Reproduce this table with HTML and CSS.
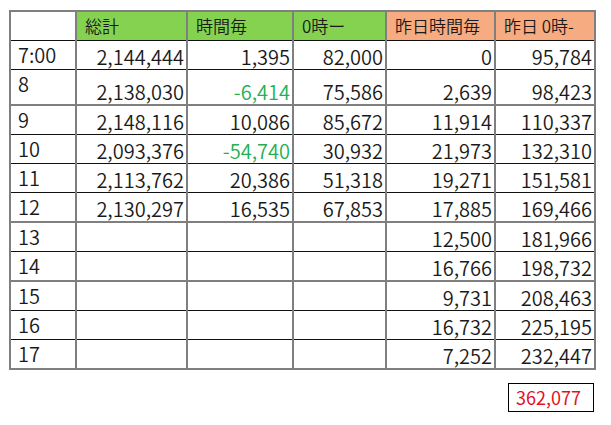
FILE: index.html
```html
<!DOCTYPE html>
<html lang="ja">
<head>
<meta charset="utf-8">
<link rel="stylesheet" href="styles.css">
</head>
<body>
<div class="page">
<table class="sheet">
  <colgroup>
    <col class="c1"><col class="c2"><col class="c3"><col class="c4"><col class="c5"><col class="c6">
  </colgroup>
  <tr class="head gb">
    <th class="blank"></th>
    <th class="green">総計</th>
    <th class="green">時間毎</th>
    <th class="green">0時ー</th>
    <th class="orange">昨日時間毎</th>
    <th class="orange">昨日 0時-</th>
  </tr>
  <tr class="bb">
    <td class="lbl">7:00</td><td>2,144,444</td><td>1,395</td><td>82,000</td><td>0</td><td>95,784</td>
  </tr>
  <tr class="tall gb">
    <td class="lbl top">8</td><td>2,138,030</td><td class="neg">-6,414</td><td>75,586</td><td>2,639</td><td>98,423</td>
  </tr>
  <tr class="bb">
    <td class="lbl">9</td><td>2,148,116</td><td>10,086</td><td>85,672</td><td>11,914</td><td>110,337</td>
  </tr>
  <tr class="bb">
    <td class="lbl">10</td><td>2,093,376</td><td class="neg">-54,740</td><td>30,932</td><td>21,973</td><td>132,310</td>
  </tr>
  <tr class="bb">
    <td class="lbl">11</td><td>2,113,762</td><td>20,386</td><td>51,318</td><td>19,271</td><td>151,581</td>
  </tr>
  <tr class="gb">
    <td class="lbl">12</td><td>2,130,297</td><td>16,535</td><td>67,853</td><td>17,885</td><td>169,466</td>
  </tr>
  <tr class="bb">
    <td class="lbl">13</td><td></td><td></td><td></td><td>12,500</td><td>181,966</td>
  </tr>
  <tr class="gb">
    <td class="lbl">14</td><td></td><td></td><td></td><td>16,766</td><td>198,732</td>
  </tr>
  <tr class="bb">
    <td class="lbl">15</td><td></td><td></td><td></td><td>9,731</td><td>208,463</td>
  </tr>
  <tr class="bb">
    <td class="lbl">16</td><td></td><td></td><td></td><td>16,732</td><td>225,195</td>
  </tr>
  <tr class="gb">
    <td class="lbl">17</td><td></td><td></td><td></td><td>7,252</td><td>232,447</td>
  </tr>
</table>
<div class="totalrow">
  <div class="total">362,077</div>
</div>
</div>
</body>
</html>
```

FILE: styles.css
```css
html, body {
  margin: 0;
  padding: 0;
  background: #ffffff;
}
.page {
  padding: 10px 0 0 9px;
  width: 585px;
  font-family: "Noto Sans CJK JP", "Noto Sans", sans-serif;
  color: #1a1a1a;
}
.sheet {
  border-collapse: collapse;
  table-layout: fixed;
  width: 585px;
}
.c1 { width: 66px; }
.c2 { width: 111px; }
.c3 { width: 106px; }
.c4 { width: 93px; }
.c5 { width: 109px; }
.c6 { width: 100px; }

.sheet th,
.sheet td {
  border-left: 2px solid #7f7f7f;
  border-right: 2px solid #7f7f7f;
  padding: 0 2px 0 7px;
  height: 28px;
  line-height: 24px;
  font-size: 20px;
  font-weight: 350;
  text-align: right;
  vertical-align: bottom;
  white-space: nowrap;
  overflow: hidden;
}
.sheet th {
  font-size: 17px;
  text-align: left;
  vertical-align: middle;
  padding-left: 8px;
  line-height: 26px;
}
.sheet tr.head th { border-top: 2px solid #7f7f7f; }
.sheet tr.bb td, .sheet tr.bb th { border-bottom: 1px solid #111111; }
.sheet tr.gb td, .sheet tr.gb th { border-bottom: 2px solid #7f7f7f; }
.sheet tr.head th { border-bottom: 1px solid #111111; }
.sheet tr.tall td { height: 32px; }

.blank { background: #ffffff; }
.green { background: #84d250; }
.orange { background: #f6ab80; }

.sheet td.lbl { text-align: left; vertical-align: middle; }
.sheet td.lbl.top { vertical-align: top; padding-top: 2px; }
.neg { color: #22b053; }

.totalrow {
  display: flex;
  justify-content: flex-end;
  margin-top: 13px;
  width: 585px;
}
.total {
  width: 77px;
  height: 27px;
  border: 1px solid #000000;
  padding-left: 7px;
  font-size: 18px;
  font-weight: 400;
  line-height: 27px;
  color: #e3111f;
}
```
